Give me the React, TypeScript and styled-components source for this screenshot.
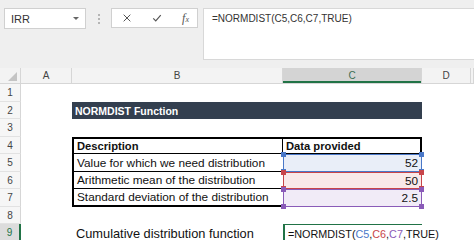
import React from "react";
import styled, { createGlobalStyle } from "styled-components";

const GlobalStyle = createGlobalStyle`
    html, body {
        margin: 0;
        padding: 0;
        background: #ffffff;
        overflow: hidden;
    }
    body {
        font-family: "Liberation Sans", Arial, sans-serif;
        color: #222;
    }
`

const GREEN = "#217346";
const COLUMNS = "21px 51px 211px 139px 49px 1fr";
const ROW_HEIGHTS = [18, 17, 18, 17, 18, 17, 18, 17, 18];

type Ref = { color: string; fill: string };
const refs: Record<string, Ref> = {
    C5: { color: "#4a78c8", fill: "#e9eef8" },
    C6: { color: "#c8454a", fill: "#f9e9e9" },
    C7: { color: "#8a5bb8", fill: "#f1ebf7" },
};

const rows = [
    { label: "Value for which we need distribution", value: "52", ref: "C5" },
    { label: "Arithmetic mean of the distribution", value: "50", ref: "C6" },
    { label: "Standard deviation of the distribution", value: "2.5", ref: "C7" },
];

export default function App(){
    return <>
        <GlobalStyle/>
        <Page>
            <Toolbar>
                <NameBox>
                    <span>IRR</span>
                    <DropArrow/>
                </NameBox>
                <Grip>
                    <i/><i/><i/>
                </Grip>
                <ButtonBox>
                    <ToolIcon viewBox="0 0 12 12">
                        <path d="M2 2 L10 10 M10 2 L2 10" stroke="#555" strokeWidth="1.2" fill="none"/>
                    </ToolIcon>
                    <ToolIcon viewBox="0 0 12 12">
                        <path d="M1.5 6.5 L4.5 9.5 L10.5 2.5" stroke="#555" strokeWidth="1.4" fill="none"/>
                    </ToolIcon>
                    <Fx>f<sub>x</sub></Fx>
                </ButtonBox>
                <FormulaBox>=NORMDIST(C5,C6,C7,TRUE)</FormulaBox>
            </Toolbar>

            <HeaderRow>
                <Corner><CornerTriangle/></Corner>
                <ColHead>A</ColHead>
                <ColHead>B</ColHead>
                <ColHead selected>C</ColHead>
                <ColHead>D</ColHead>
                <ColHead/>
            </HeaderRow>

            <Row h={ROW_HEIGHTS[0]}>
                <RowHead>1</RowHead>
            </Row>
            <Row h={ROW_HEIGHTS[1]}>
                <RowHead>2</RowHead>
                <Cell/>
                <TitleBar>NORMDIST Function</TitleBar>
            </Row>
            <Row h={ROW_HEIGHTS[2]}>
                <RowHead>3</RowHead>
            </Row>
            <Row h={ROW_HEIGHTS[3]}>
                <RowHead>4</RowHead>
                <Cell/>
                <TableCell first top bold>Description</TableCell>
                <TableCell top bold last>Data provided</TableCell>
            </Row>
            {rows.map((item, key) => {
                const r = refs[item.ref];
                return <Row key={key} h={ROW_HEIGHTS[4 + key]}>
                    <RowHead>{5 + key}</RowHead>
                    <Cell/>
                    <TableCell first bottomThick={key === 2}>{item.label}</TableCell>
                    <RefCell color={r.color} fill={r.fill}>
                        {item.value}
                        <Handle color={r.color} style={{left: -3, top: -3}}/>
                        <Handle color={r.color} style={{right: -3, top: -3}}/>
                        <Handle color={r.color} style={{left: -3, bottom: -3}}/>
                        <Handle color={r.color} style={{right: -3, bottom: -3}}/>
                    </RefCell>
                </Row>
            })}
            <Row h={ROW_HEIGHTS[7]}>
                <RowHead>8</RowHead>
            </Row>
            <Row h={ROW_HEIGHTS[8]}>
                <RowHead active>9</RowHead>
                <Cell/>
                <Cell large>Cumulative distribution function</Cell>
                <EditCell>
                    =NORMDIST(<Ref color={refs.C5.color}>C5</Ref>,<Ref color={refs.C6.color}>C6</Ref>,<Ref color={refs.C7.color}>C7</Ref>,TRUE)<Caret/>
                </EditCell>
            </Row>
        </Page>
    </>
}

const Page = styled.div`
    width: 474px;
    height: 240px;
    overflow: hidden;
    background: #fff;
`
const Toolbar = styled.div`
    height: 68px;
    box-sizing: border-box;
    background: #efefef;
    display: flex;
    align-items: flex-start;
    padding: 8px 0 0 4px;
`
const NameBox = styled.div`
    width: 82px;
    height: 21px;
    box-sizing: border-box;
    background: #fff;
    border: 1px solid #d0d0d0;
    display: flex;
    align-items: center;
    justify-content: space-between;
    padding: 0 6px 0 6px;
    font-size: 11px;
    color: #333;
`
const DropArrow = styled.div`
    width: 0;
    height: 0;
    border-left: 3px solid transparent;
    border-right: 3px solid transparent;
    border-top: 3px solid #666;
`
const Grip = styled.div`
    width: 25px;
    height: 21px;
    display: flex;
    flex-direction: column;
    align-items: center;
    justify-content: center;
    gap: 2px;
    i {
        width: 2px;
        height: 2px;
        background: #b5b5b5;
        display: block;
    }
`
const ButtonBox = styled.div`
    width: 87px;
    height: 20px;
    box-sizing: border-box;
    background: #fff;
    border: 1px solid #d0d0d0;
    display: flex;
    align-items: center;
    justify-content: space-between;
    padding: 0 8px 0 10px;
`
const ToolIcon = styled.svg`
    width: 10px;
    height: 10px;
`
const Fx = styled.span`
    font-family: "Liberation Serif", "Times New Roman", serif;
    font-style: italic;
    font-size: 12px;
    color: #555;
    sub {
        font-size: 8px;
        vertical-align: baseline;
    }
`
const FormulaBox = styled.div`
    flex: 1;
    height: 52px;
    margin-left: 5px;
    box-sizing: border-box;
    background: #fff;
    border: 1px solid #d8d8d8;
    border-right: none;
    padding: 4px 0 0 8px;
    font-size: 10px;
    color: #333;
`
const HeaderRow = styled.div`
    display: grid;
    grid-template-columns: ${COLUMNS};
    height: 16px;
    background: #f3f3f3;
    border-bottom: 1px solid #d6d6d6;
    box-sizing: border-box;
`
const Corner = styled.div`
    position: relative;
    border-right: 1px solid #d6d6d6;
`
const CornerTriangle = styled.div`
    position: absolute;
    right: 3px;
    bottom: 2px;
    width: 0;
    height: 0;
    border-left: 9px solid transparent;
    border-bottom: 9px solid #c4c4c4;
`
const ColHead = styled.div<{selected?: boolean}>`
    display: flex;
    align-items: center;
    justify-content: center;
    font-size: 10px;
    color: ${p => p.selected ? "#3c6e55" : "#444"};
    background: ${p => p.selected ? "#d4d4d4" : "transparent"};
    border-right: 1px solid #d6d6d6;
    box-shadow: ${p => p.selected ? `inset 0 -2px 0 ${GREEN}` : "none"};
`
const Row = styled.div<{h: number}>`
    display: grid;
    grid-template-columns: ${COLUMNS};
    height: ${p => p.h}px;
`
const RowHead = styled.div<{active?: boolean}>`
    display: flex;
    align-items: center;
    justify-content: center;
    font-size: 10px;
    color: ${p => p.active ? GREEN : "#444"};
    background: ${p => p.active ? "#dcdcdc" : "#f6f6f6"};
    border-right: ${p => p.active ? `2px solid ${GREEN}` : "1px solid #d6d6d6"};
    border-bottom: 1px solid #e2e2e2;
    box-sizing: border-box;
`
const Cell = styled.div<{large?: boolean}>`
    display: flex;
    align-items: center;
    padding-left: 4px;
    font-size: ${p => p.large ? "12.8px" : "11.8px"};
    color: #111;
    white-space: nowrap;
`
const TitleBar = styled.div`
    grid-column: span 2;
    background: #333f4f;
    color: #fff;
    font-weight: bold;
    font-size: 10.5px;
    display: flex;
    align-items: center;
    padding-left: 3px;
`
const TableCell = styled.div<{first?: boolean; last?: boolean; top?: boolean; bold?: boolean; bottomThick?: boolean}>`
    display: flex;
    align-items: center;
    box-sizing: border-box;
    padding-left: 3px;
    font-size: ${p => p.bold ? "11.2px" : "11.8px"};
    font-weight: ${p => p.bold ? "bold" : "normal"};
    color: #111;
    white-space: nowrap;
    border-left: ${p => p.first ? "2px solid #000" : "none"};
    border-right: ${p => p.last ? "2px solid #000" : p.first && !p.top ? "none" : "1px solid #000"};
    border-top: ${p => p.top ? "2px solid #000" : "none"};
    border-bottom: ${p => p.bottomThick ? "2px solid #000" : "1px solid #000"};
`
const RefCell = styled.div<{color: string; fill: string}>`
    position: relative;
    display: flex;
    align-items: center;
    justify-content: flex-end;
    box-sizing: border-box;
    padding-right: 3px;
    font-size: 11.8px;
    color: #111;
    background: ${p => p.fill};
    border: 1px solid ${p => p.color};
`
const Handle = styled.div<{color: string}>`
    position: absolute;
    width: 5px;
    height: 5px;
    background: ${p => p.color};
`
const EditCell = styled.div`
    display: flex;
    align-items: center;
    box-sizing: border-box;
    padding-left: 3px;
    font-size: 10.8px;
    color: #111;
    white-space: nowrap;
    border-top: 1px solid ${GREEN};
    border-left: 2px solid ${GREEN};
    overflow: visible;
`
const Ref = styled.span<{color: string}>`
    color: ${p => p.color};
`
const Caret = styled.span`
    display: inline-block;
    width: 1px;
    height: 13px;
    background: #000;
    margin-left: 2px;
`
